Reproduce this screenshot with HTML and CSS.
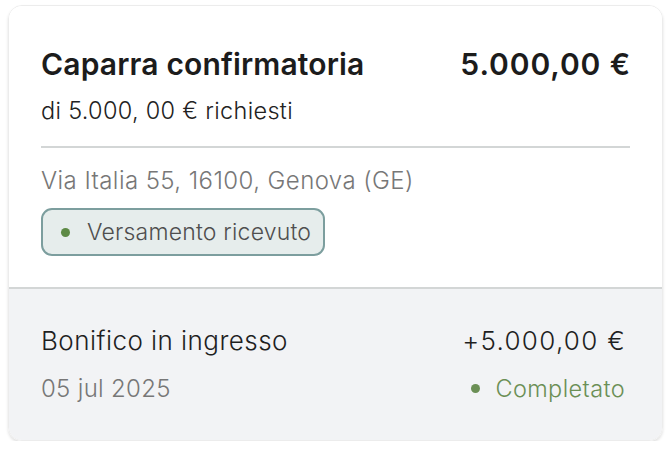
FILE: index.html
```html
<!DOCTYPE html>
<html lang="it">
<head>
<meta charset="utf-8">
<link rel="stylesheet" href="styles.css">
</head>
<body>
<div class="card">
  <div class="top">
    <div class="row head">
      <span class="title">Caparra confirmatoria</span>
      <span class="amount">5.000,00 €</span>
    </div>
    <div class="sub">di 5.000, 00 € richiesti</div>
    <div class="divider"></div>
    <div class="addr">Via Italia 55, 16100, Genova (GE)</div>
    <div class="badge"><span class="dot"></span>Versamento ricevuto</div>
  </div>
  <div class="bottom">
    <div class="row">
      <span class="tx">Bonifico in ingresso</span>
      <span class="tx money">+5.000,00 €</span>
    </div>
    <div class="row meta">
      <span class="date">05 jul 2025</span>
      <span class="status"><span class="dot"></span>Completato</span>
    </div>
  </div>
</div>
</body>
</html>
```
FILE: styles.css
```css
html, body { margin: 0; padding: 0; background: #fff; }
body { font-family: Inter, "Noto Sans", sans-serif; color: #1f1f1f; padding: 5px 7px 0 8px; }
.card {
  width: 655px;
  height: 436px;
  box-sizing: border-box;
  border: 1px solid #ececec;
  border-radius: 14px;
  box-shadow: 0 2px 3px rgba(0,0,0,0.12);
  overflow: hidden;
  display: flex;
  flex-direction: column;
}
.top { background: #fff; padding: 40px 32px 0 32px; height: 281px; box-sizing: border-box; }
.row { display: flex; justify-content: space-between; align-items: baseline; }
.title, .amount { font-size: 30px; line-height: 36px; font-weight: 600; color: #1c1c1c; }
.title { letter-spacing: 0.15px; }
.amount { letter-spacing: 0.9px; margin-right: -1px; }
.sub { font-size: 23.5px; line-height: 30px; font-weight: 300; margin-top: 14px; color: #222; letter-spacing: 0.3px; }
.divider { height: 2px; background: #d3d6d6; margin-top: 20px; }
.addr { font-size: 24px; line-height: 30px; font-weight: 300; color: #777; margin-top: 18px; letter-spacing: 0.42px; }
.badge {
  display: inline-flex; align-items: center;
  margin-top: 12px;
  height: 48px; box-sizing: border-box;
  padding: 0 12px 0 18px;
  border: 2px solid #7c9e9e;
  border-radius: 11px;
  background: #e6edec;
  font-size: 23px; font-weight: 300; color: #4f4f4f; letter-spacing: 0.2px;
}
.dot { width: 9px; height: 9px; border-radius: 50%; background: #5d8a45; margin-right: 17px; display: inline-block; }
.bottom { flex: 1; background: #f2f3f5; border-top: 2px solid #d3d6d6; padding: 36px 37px 0 32px; }
.tx { font-size: 26px; line-height: 32px; font-weight: 300; color: #1f1f1f; letter-spacing: 0.45px; }
.money { letter-spacing: 1.3px; margin-right: -1px; }
.meta { margin-top: 17px; }
.date { font-size: 24px; line-height: 30px; font-weight: 300; color: #777; letter-spacing: 0.3px; }
.status { font-size: 23.5px; line-height: 30px; font-weight: 300; color: #6b8f55; letter-spacing: 0.4px; }
.status .dot { margin-right: 15px; background: #6b8f55; vertical-align: middle; position: relative; top: -2px; }
```
